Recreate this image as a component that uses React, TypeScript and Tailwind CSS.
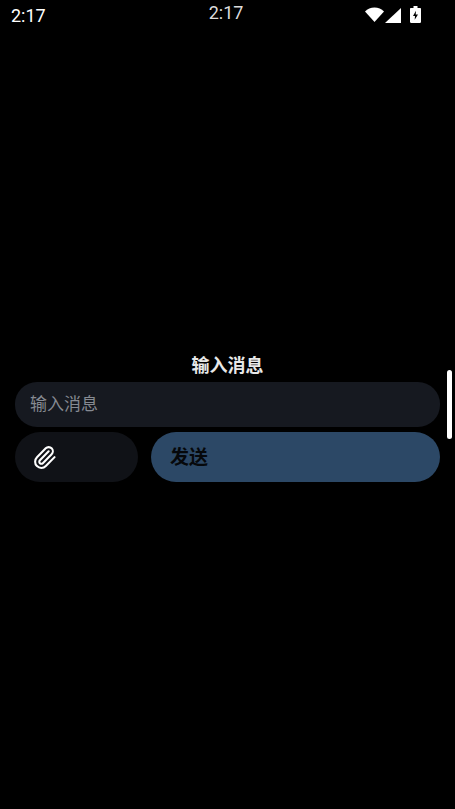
import React from 'react'
import { Paperclip } from 'lucide-react'

const FONT = "font-['Roboto','Noto_Sans_CJK_SC',sans-serif]"

function StatusIcons() {
  return (
    <div className="flex items-start">
      <svg width="19" height="15" viewBox="0 0 19 15" className="mt-[1px]">
        <path d="M0 4.500C2.500 1.800 5.800 0.500 9.500 0.500S16.500 1.800 19 4.500L9.500 15Z" fill="#fff" />
      </svg>
      <svg width="16" height="15" viewBox="0 0 16 15" className="ml-[1px] mt-[2px]">
        <path d="M16 0V15H0Z" fill="#fff" />
      </svg>
      <svg width="11" height="17" viewBox="0 0 11 18" className="ml-[9px]" preserveAspectRatio="none">
        <path d="M3.500 0H7.500V2H10C10.500 2 11 2.500 11 3V17C11 17.500 10.500 18 10 18H1C0.500 18 0 17.500 0 17V3C0 2.500 0.500 2 1 2H3.500Z" fill="#fff" />
        <path d="M6 5L3 10.500H5L4.700 14.500L8 9H5.700Z" fill="#000" />
      </svg>
    </div>
  )
}

export default function App(): React.ReactElement {
  return (
    <div className={`${FONT} relative w-[455px] h-[809px] bg-black overflow-hidden`}>
      <div className="flex items-start h-[355px] pl-[11px] pr-[34px]">
        <span className="mt-[6px] text-[18px] leading-5 text-white">2:17</span>
        <span className="mt-[3px] ml-[163px] text-[18px] leading-5 text-[#dcdcdc]">2:17</span>
        <div className="mt-[6px] ml-auto">
          <StatusIcons />
        </div>
      </div>

      <div className="flex flex-col px-[15px]">
        <div className="h-[27px] text-center text-[18px] leading-[21px] font-bold text-[#e8e8e8]">输入消息</div>
        <div className="flex items-center h-[45px] w-[425px] rounded-[22px] bg-[#161920] pl-[15px] text-[17px] text-[#868a92]">
          输入消息
        </div>
        <div className="flex justify-between mt-[5px] w-[425px]">
          <button className="flex items-center h-[50px] w-[123px] rounded-[25px] bg-[#101217] pl-[17px]">
            <Paperclip size={25} strokeWidth={2} color="#fff" />
          </button>
          <button className="flex items-center h-[50px] w-[289px] rounded-[25px] bg-[#2c4866] pl-[19px] pt-[3px] text-[19px] font-bold text-[#06080b]">
            发送
          </button>
        </div>
      </div>

      <div className="absolute left-[447px] top-[370px] h-[69px] w-[5px] rounded-full bg-white" />
    </div>
  )
}
